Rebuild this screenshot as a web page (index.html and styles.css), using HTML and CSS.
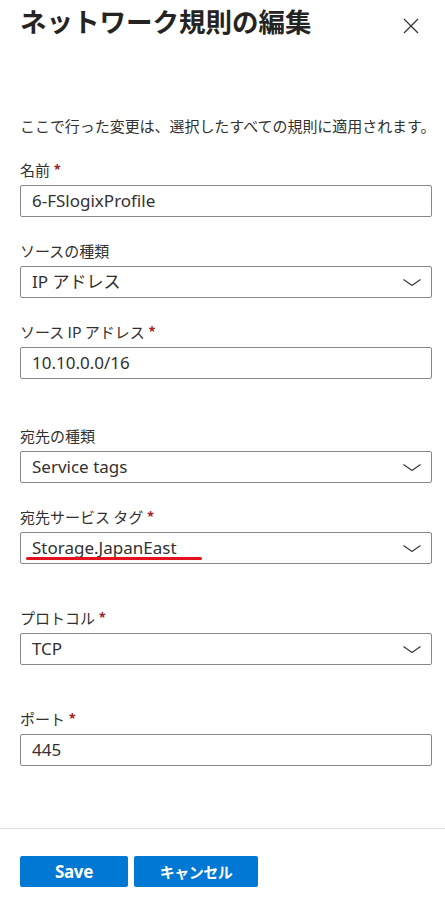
FILE: index.html
```html
<!DOCTYPE html>
<html lang="ja">
<head>
<meta charset="utf-8">
<title>ネットワーク規則の編集</title>
<link rel="stylesheet" href="styles.css">
</head>
<body>
<div class="panel">
  <header class="header">
    <h1 class="title">ネットワーク規則の編集</h1>
    <button class="close" aria-label="閉じる">
      <svg width="16" height="16" viewBox="0 0 16 16"><path d="M1 1 L15 15 M15 1 L1 15" stroke="#323130" stroke-width="1.2" fill="none"/></svg>
    </button>
  </header>
  <main class="content">
    <p class="desc">ここで行った変更は、選択したすべての規則に適用されます。</p>

    <div class="field">
      <label class="label">名前 <span class="req">*</span></label>
      <div class="box"><span class="value">6-FSlogixProfile</span></div>
    </div>

    <div class="field">
      <label class="label">ソースの種類</label>
      <div class="box select"><span class="value">IP アドレス</span><svg class="chev" width="18" height="7" viewBox="0 0 18 7"><polyline points="0.5,0.5 9,6.5 17.5,0.5" fill="none" stroke="#323130" stroke-width="1.1"/></svg></div>
    </div>

    <div class="field">
      <label class="label">ソース IP アドレス <span class="req">*</span></label>
      <div class="box"><span class="value">10.10.0.0/16</span></div>
    </div>

    <div class="field spaced-lg">
      <label class="label">宛先の種類</label>
      <div class="box select"><span class="value">Service tags</span><svg class="chev" width="18" height="7" viewBox="0 0 18 7"><polyline points="0.5,0.5 9,6.5 17.5,0.5" fill="none" stroke="#323130" stroke-width="1.1"/></svg></div>
    </div>

    <div class="field">
      <label class="label">宛先サービス タグ <span class="req">*</span></label>
      <div class="box select"><span class="value">Storage.JapanEast</span><svg class="chev" width="18" height="7" viewBox="0 0 18 7"><polyline points="0.5,0.5 9,6.5 17.5,0.5" fill="none" stroke="#323130" stroke-width="1.1"/></svg><span class="mark"></span></div>
    </div>

    <div class="field spaced">
      <label class="label">プロトコル <span class="req">*</span></label>
      <div class="box select"><span class="value">TCP</span><svg class="chev" width="18" height="7" viewBox="0 0 18 7"><polyline points="0.5,0.5 9,6.5 17.5,0.5" fill="none" stroke="#323130" stroke-width="1.1"/></svg></div>
    </div>

    <div class="field spaced">
      <label class="label">ポート <span class="req">*</span></label>
      <div class="box"><span class="value">445</span></div>
    </div>
  </main>
  <footer class="footer">
    <button class="btn btn-save">Save</button>
    <button class="btn btn-cancel">キャンセル</button>
  </footer>
</div>
</body>
</html>
```

FILE: styles.css
```css
html, body {
  margin: 0;
  padding: 0;
  background: #ffffff;
}

body {
  font-family: "Noto Sans", "Noto Sans CJK JP", sans-serif;
  color: #323130;
}

.panel {
  height: 919px;
  display: flex;
  flex-direction: column;
  box-sizing: border-box;
}

.header {
  display: flex;
  justify-content: space-between;
  align-items: flex-start;
  padding: 3px 26px 0 20px;
}

.title {
  margin: 0;
  font-family: "Noto Sans CJK JP", sans-serif;
  font-size: 26.5px;
  line-height: 36px;
  font-weight: 600;
  color: #252423;
}

.close {
  margin-top: 15px;
  padding: 0;
  border: 0;
  background: none;
  width: 16px;
  height: 16px;
  display: block;
}

.close svg {
  display: block;
}

.content {
  flex: 1;
  padding: 0 13px 0 20px;
}

.desc {
  margin: 77px 0 0;
  font-family: "Noto Sans CJK JP", sans-serif;
  font-size: 15px;
  letter-spacing: -0.05px;
  line-height: 20px;
  white-space: nowrap;
}

.field {
  margin-top: 24px;
}

.field.spaced {
  margin-top: 44px;
}

.field.spaced-lg {
  margin-top: 47px;
}

.label {
  display: block;
  height: 20px;
  overflow: visible;
  font-family: "Noto Sans CJK JP", sans-serif;
  font-size: 15px;
  line-height: 20px;
  margin-bottom: 5px;
}

.req {
  color: #a4262c;
  font-weight: 700;
  font-family: "Noto Sans CJK JP", sans-serif;
}

.box {
  position: relative;
  height: 32px;
  box-sizing: border-box;
  border: 1px solid #8a8886;
  border-radius: 2px;
  display: flex;
  align-items: center;
  padding: 0 10px 0 11px;
}

.value {
  flex: 1;
  font-size: 17px;
  line-height: 30px;
  white-space: nowrap;
  color: #323130;
}

.chev {
  display: block;
  flex: none;
}

.mark {
  position: absolute;
  left: 5px;
  top: 24px;
  width: 176px;
  height: 3px;
  border-radius: 2px;
  background: #e3101e;
}

.footer {
  border-top: 1px solid #e1dfdd;
  padding: 27px 20px 32px;
  display: flex;
  gap: 6px;
}

.btn {
  height: 31px;
  border: 0;
  border-radius: 2px;
  background: #0078d4;
  color: #ffffff;
  font-family: "Noto Sans", "Noto Sans CJK JP", sans-serif;
  font-weight: 700;
  font-size: 17px;
  padding: 0;
  line-height: 31px;
}

.btn-save {
  width: 108px;
  letter-spacing: -0.3px;
}

.btn-cancel {
  width: 124px;
  font-family: "Noto Sans CJK JP", sans-serif;
  font-size: 15px;
  letter-spacing: -0.5px;
}
```
